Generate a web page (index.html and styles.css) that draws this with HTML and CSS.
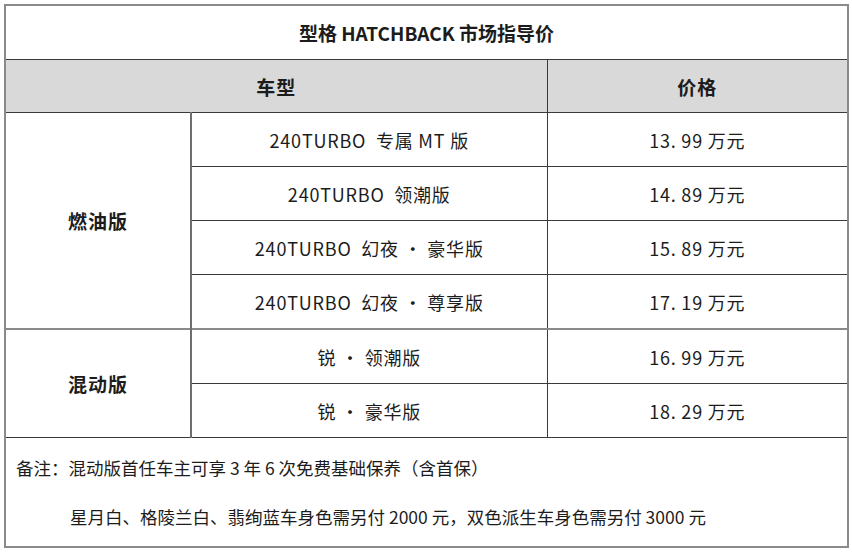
FILE: index.html
```html
<!DOCTYPE html>
<html lang="zh-CN">
<head>
<meta charset="utf-8">
<title>型格 HATCHBACK 市场指导价</title>
<link rel="stylesheet" href="styles.css">
</head>
<body>
<div class="page">
  <table class="price-table">
    <colgroup>
      <col class="c-group">
      <col class="c-model">
      <col class="c-price">
    </colgroup>
    <tr class="row-title">
      <td colspan="3" class="title">型格 HATCHBACK 市场指导价</td>
    </tr>
    <tr class="row-head">
      <th colspan="2">车型</th>
      <th>价格</th>
    </tr>
    <tr class="row">
      <td rowspan="4" class="group">燃油版</td>
      <td>240TURBO&nbsp; 专属 MT 版</td>
      <td>13. 99 万元</td>
    </tr>
    <tr class="row">
      <td>240TURBO&nbsp; 领潮版</td>
      <td>14. 89 万元</td>
    </tr>
    <tr class="row">
      <td>240TURBO&nbsp; 幻夜 · 豪华版</td>
      <td>15. 89 万元</td>
    </tr>
    <tr class="row">
      <td>240TURBO&nbsp; 幻夜 · 尊享版</td>
      <td>17. 19 万元</td>
    </tr>
    <tr class="row group-start">
      <td rowspan="2" class="group">混动版</td>
      <td>锐 · 领潮版</td>
      <td>16. 99 万元</td>
    </tr>
    <tr class="row">
      <td>锐 · 豪华版</td>
      <td>18. 29 万元</td>
    </tr>
    <tr class="row-notes">
      <td colspan="3" class="notes">
        <div class="note-line">备注：混动版首任车主可享 3 年 6 次免费基础保养（含首保）</div>
        <div class="note-line indent">星月白、格陵兰白、翡绚蓝车身色需另付 2000 元，双色派生车身色需另付 3000 元</div>
      </td>
    </tr>
  </table>
</div>
</body>
</html>
```

FILE: styles.css
```css
html, body {
  margin: 0;
  padding: 0;
  background: #ffffff;
}

.page {
  padding: 4px 0 0 4px;
  font-family: "Noto Sans CJK SC", "Noto Sans", sans-serif;
  color: #1c1c1c;
}

.price-table {
  border-collapse: collapse;
  width: 843px;
  table-layout: fixed;
  border: 2px solid #8a8a8a;
}

.c-group { width: 186px; }
.c-model { width: 356px; }
.c-price { width: 301px; }

.price-table td,
.price-table th {
  border: 1px solid #3a3a3a;
  text-align: center;
  vertical-align: middle;
  padding: 0;
  font-size: 18px;
  font-weight: 400;
  letter-spacing: 0.8px;
}

.row-title td {
  height: 53px;
  font-weight: 700;
  font-size: 19px;
  letter-spacing: 0;
}

.row-head th {
  height: 52px;
  background: #d9d9d9;
  font-weight: 700;
  font-size: 19px;
  letter-spacing: 1px;
}

.row td {
  height: 53px;
}

.price-table td.group {
  font-weight: 700;
  font-size: 19px;
  letter-spacing: 1px;
  border-right: 2px solid #6e6e6e;
}

.group-start td {
  border-top: 2px solid #8a8a8a;
}

.price-table td.notes {
  height: 108px;
  text-align: left;
  padding-left: 10px;
  font-size: 17.5px;
  letter-spacing: 0;
}

.note-line {
  line-height: 49px;
}

.note-line.indent {
  padding-left: 54px;
}
```
